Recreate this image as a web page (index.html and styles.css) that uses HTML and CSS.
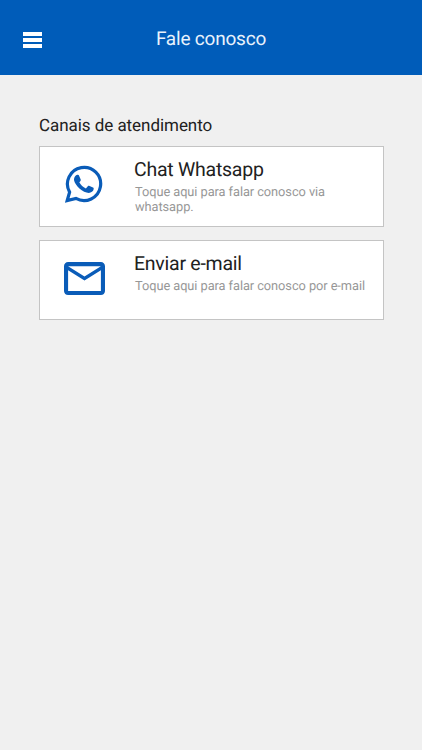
FILE: index.html
```html
<!DOCTYPE html>
<html lang="pt-BR">
<head>
<meta charset="utf-8">
<meta name="viewport" content="width=device-width, initial-scale=1">
<title>Fale conosco</title>
<link rel="stylesheet" href="styles.css">
</head>
<body>
<header class="topbar">
  <button class="menu" aria-label="Menu"><span></span><span></span><span></span></button>
  <h1>Fale conosco</h1>
</header>
<main>
  <h2>Canais de atendimento</h2>
  <a class="card card-chat">
    <svg class="icon chat" viewBox="0 0 38 38">
      <path d="M2.200 35.500 4.600 27.100A16.600 16.600 0 1 1 10.900 33.400Z" fill="none" stroke="currentColor" stroke-width="3.2"/>
      <path d="M10.800 10.400c1-.8 2.800-.9 3.400.5l1.500 3.500c.3.800-.1 1.500-1.400 2.900 1.700 3.100 3.600 4.800 6.600 6.100l1.900-2.200c.5-.6 1-.6 1.700-.3l3.500 1.700c.7.4.8.8.7 1.500-.4 2.500-2.600 3.800-4.900 3.800-2.700 0-6.700-2-9.100-4.200-2.800-2.500-5.100-5.600-5.600-8.100-.4-2 .4-4.100 1.700-5.200Z" fill="currentColor"/>
    </svg>
    <div class="copy">
      <h3>Chat Whatsapp</h3>
      <p>Toque aqui para falar conosco via<br>whatsapp.</p>
    </div>
  </a>
  <a class="card card-mail">
    <svg class="icon mail" viewBox="2 4 20 16" preserveAspectRatio="none">
      <path fill="currentColor" d="M22 6c0-1.100-.9-2-2-2H4c-1.100 0-2 .9-2 2v12c0 1.100.9 2 2 2h16c1.100 0 2-.9 2-2V6zm-2 0l-8 5-8-5h16zm0 12H4V8l8 5 8-5v10z"/>
    </svg>
    <div class="copy">
      <h3>Enviar e-mail</h3>
      <p>Toque aqui para falar conosco por e-mail</p>
    </div>
  </a>
</main>
</body>
</html>
```
FILE: styles.css
```css
* { box-sizing: border-box; }
body {
  margin: 0;
  min-height: 750px;
  background: #f0f0f0;
  color: #212121;
  font-family: Roboto, "Liberation Sans", sans-serif;
  text-rendering: geometricPrecision;
}
h1, h2, h3, p { margin: 0; font-weight: 400; }
.topbar {
  display: grid;
  grid-template-columns: 23px 19px 1fr 42px;
  align-items: center;
  height: 75px;
  padding-top: 4px;
  background: #005cb9;
  color: #e8f2fc;
}
.menu {
  grid-column: 2;
  display: flex;
  flex-direction: column;
  gap: 2px;
  padding: 0;
  border: 0;
  background: none;
}
.menu span { height: 4px; background: #fff; }
.topbar h1 {
  padding-bottom: 1px;
  font-size: 19px;
  line-height: 24px;
  letter-spacing: -0.2px;
  text-align: center;
}
main {
  display: flex;
  flex-direction: column;
  gap: 13px;
  padding: 40px 38px 0 39px;
}
h2 {
  height: 18px;
  font-size: 17px;
  line-height: 22px;
  letter-spacing: -0.05px;
}
.card {
  display: grid;
  grid-template-columns: 94px 1fr;
  align-items: start;
  border: 1px solid #c4c4c4;
  background: #fff;
}
.card-chat { height: 81px; }
.card-mail { height: 80px; }
.icon { color: #0a5cb8; }
.chat { width: 38px; height: 38px; margin: 18px 0 0 25px; }
.mail { width: 41px; height: 33px; margin: 21px 0 0 24px; }
.copy { padding-top: 11px; }
h3 {
  font-size: 19.5px;
  line-height: 24px;
  letter-spacing: -0.25px;
}
p {
  margin: 3px 0 0 1px;
  color: #979797;
  font-size: 12.8px;
  line-height: 15px;
  letter-spacing: -0.06px;
  white-space: nowrap;
}
```
